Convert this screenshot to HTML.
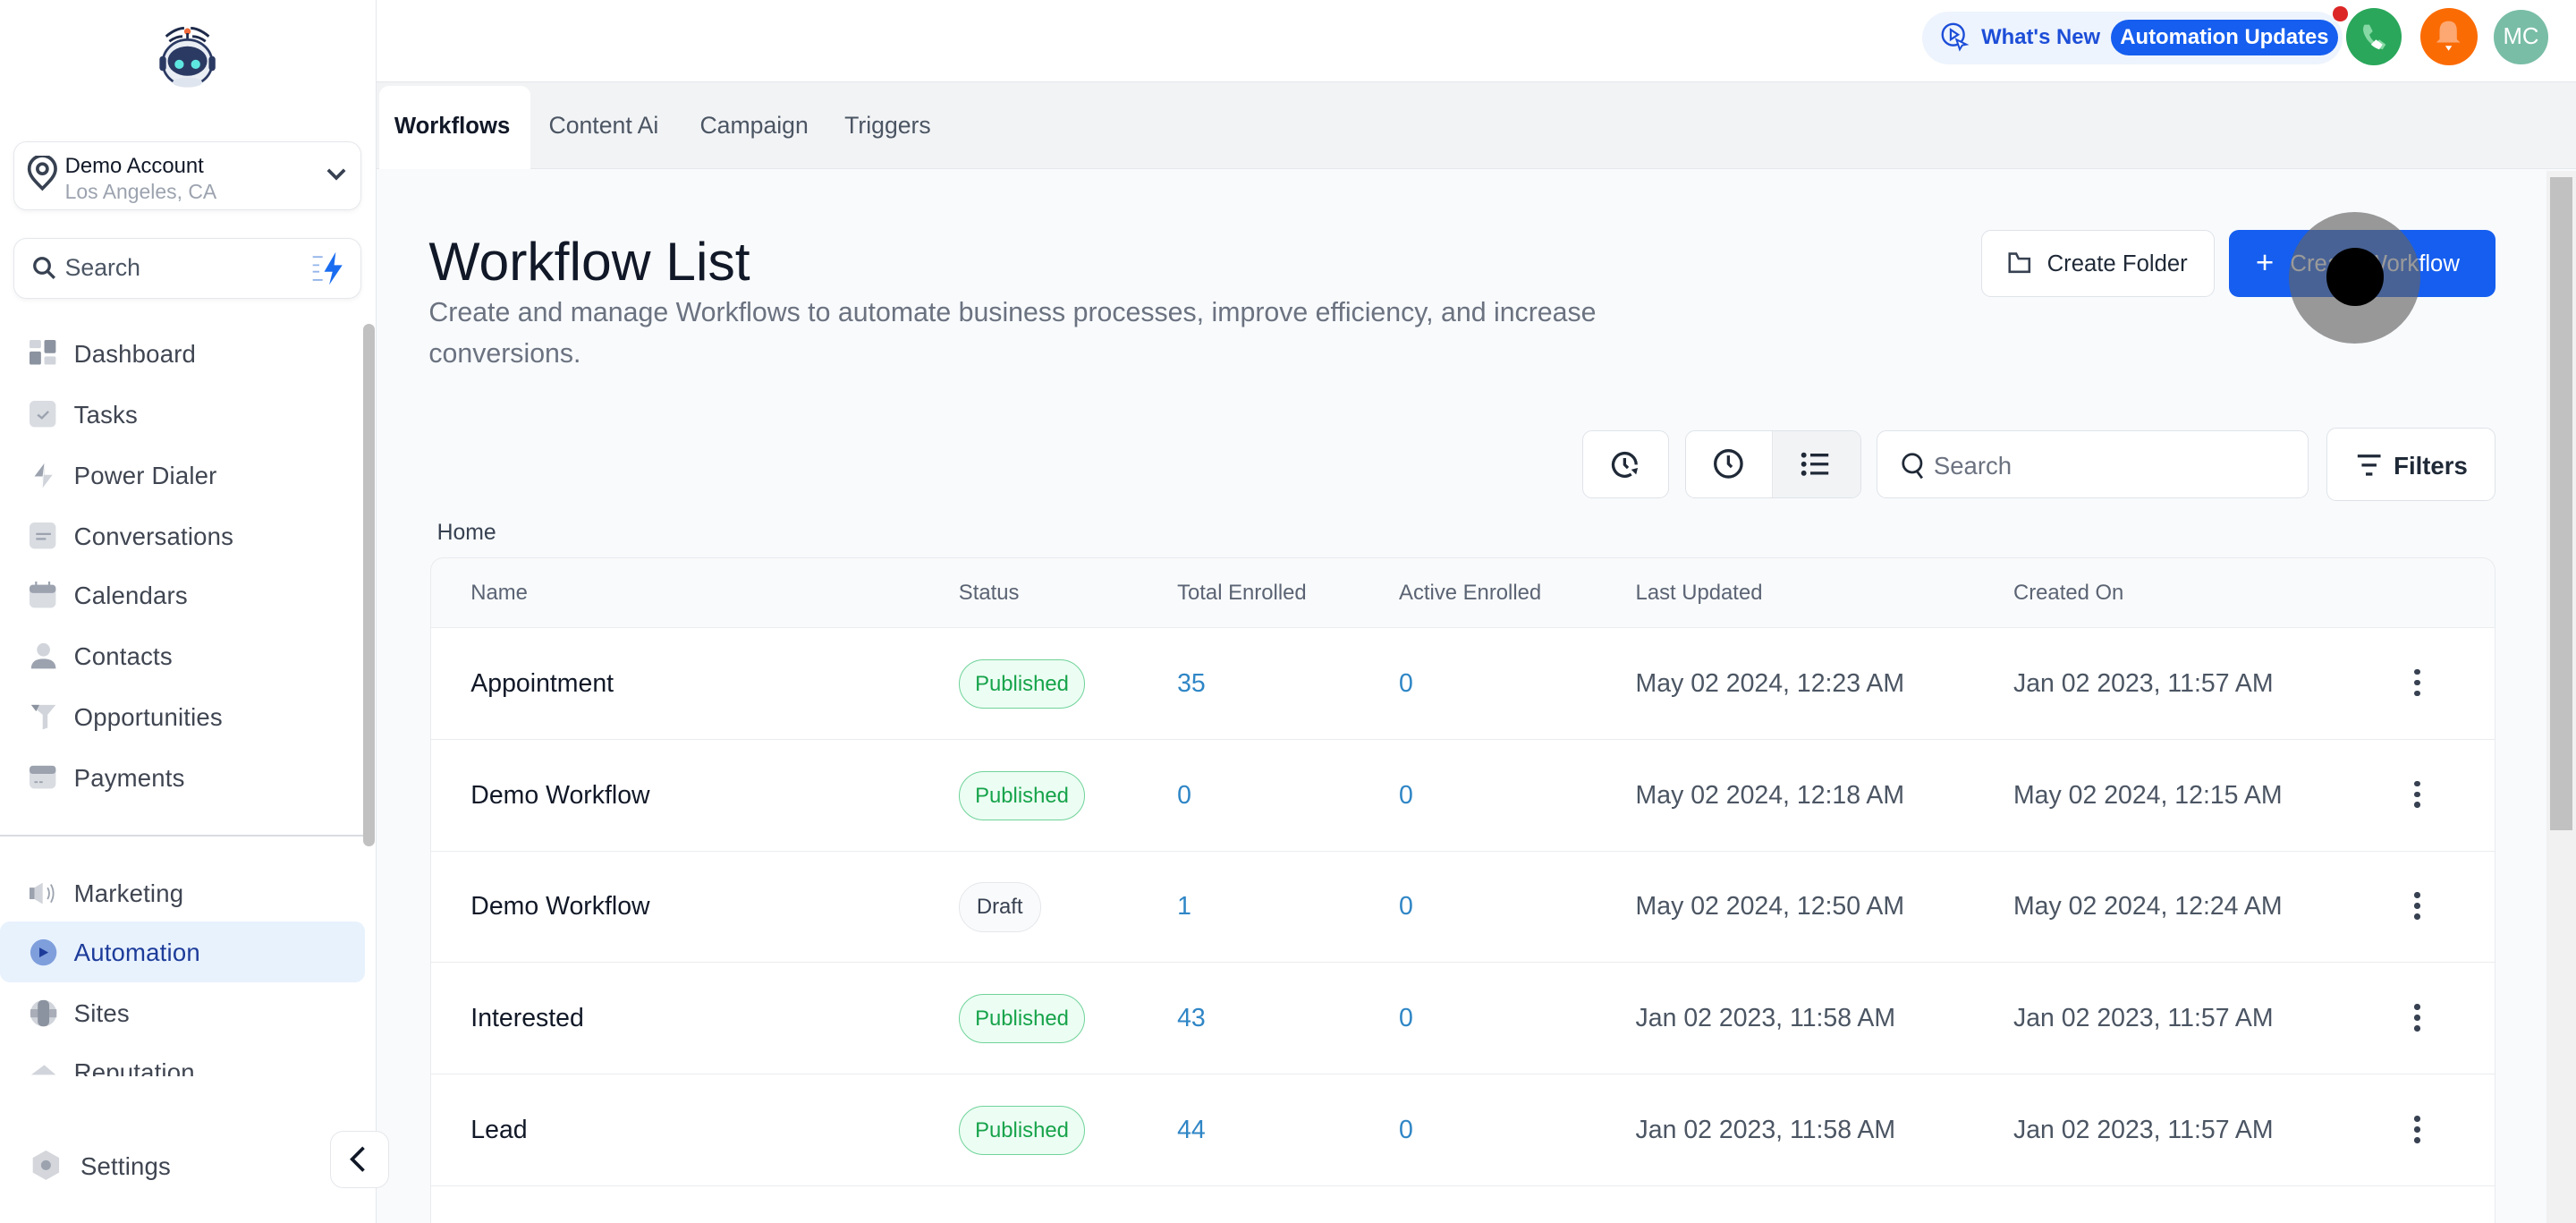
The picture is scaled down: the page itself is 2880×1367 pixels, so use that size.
<!DOCTYPE html>
<html><head><meta charset="utf-8">
<style>
*{box-sizing:border-box;margin:0;padding:0}
html,body{width:2880px;height:1367px;overflow:hidden;background:#fff}
#root{position:relative;width:1568px;height:744px;zoom:1.83674;font-family:"Liberation Sans",sans-serif;color:#1f2937;overflow:hidden;background:#f8fafc}
.a{position:absolute}
.side{left:0;top:0;width:229px;height:744px;background:#fff;border-right:1px solid #e5e7eb}
.nav{position:absolute;left:45px;font-size:15px;color:#3f4551;letter-spacing:.1px}
.ic{position:absolute;left:18px;width:17px;height:17px}
.top{left:229px;top:0;width:1339px;height:50px;background:#fff;border-bottom:1px solid #e5e7eb}
.tabs{left:229px;top:50px;width:1339px;height:53px;background:#f2f3f5;border-bottom:1px solid #e5e7eb}
.tab{position:absolute;top:19px;font-size:14.5px;color:#4b5563}
.btn{position:absolute;background:#fff;border:1px solid #dfe3e8;border-radius:6px}
.th{position:absolute;top:14px;font-size:13px;color:#5b6474}
.row{position:absolute;left:0;width:1256px;height:68px;border-top:1px solid #eaecef;background:#fff}
.c{position:absolute;top:25px;font-size:15.5px;color:#4b5563}
.n{color:#111827}
.num{color:#2f86c6}
.pub{position:absolute;left:321px;top:19px;width:77px;height:30px;border:1px solid #6fd39a;background:#ecfdf3;border-radius:15px;color:#16a34a;font-size:13px;text-align:center;line-height:29px}
.draft{position:absolute;left:321px;top:19px;width:50px;height:30px;border:1px solid #e5e7eb;background:#f9fafb;border-radius:15px;color:#374151;font-size:13px;text-align:center;line-height:29px}
.dots{position:absolute;left:1207px;top:25px;width:4px;height:18px}
.dots i{display:block;width:3.5px;height:3.5px;border-radius:50%;background:#374151;margin-bottom:3px}
</style></head><body><div id="root">

<!-- sidebar -->
<div class="a side">
  <svg class="a" style="left:93px;top:14px" width="42" height="42" viewBox="0 0 42 42">
    <path d="M8 8q6-5 11-5M10 11q4-3 8-3M34 8q-6-5-11-5M32 11q-4-3-8-3" stroke="#1e2a4a" stroke-width="1.6" fill="none"/>
    <circle cx="21" cy="5" r="2" fill="#f26b3a"/><line x1="21" y1="6" x2="21" y2="10" stroke="#1e2a4a" stroke-width="1.5"/>
    <ellipse cx="21" cy="24" rx="15" ry="14" fill="#e9edf4" stroke="#2b3a63" stroke-width="1.5"/>
    <ellipse cx="21" cy="23" rx="12" ry="9" fill="#2b3a63"/>
    <ellipse cx="21" cy="36" rx="9" ry="3" fill="#dfe5ef"/>
    <circle cx="16" cy="25" r="2.8" fill="#5ee7e0"/><circle cx="26" cy="25" r="2.8" fill="#5ee7e0"/>
    <rect x="4" y="20" width="4" height="9" rx="2" fill="#2b3a63"/><rect x="34" y="20" width="4" height="9" rx="2" fill="#2b3a63"/>
  </svg>
  <div class="a" style="left:8px;top:86px;width:212px;height:42px;border:1px solid #e5e7eb;border-radius:8px;box-shadow:0 1px 3px rgba(0,0,0,.05)">
    <svg class="a" style="left:7px;top:8px" width="20" height="22" viewBox="0 0 20 22"><path d="M10 20C5 15 2 12 2 8a8 8 0 0116 0c0 4-3 7-8 12z" fill="none" stroke="#374151" stroke-width="2"/><circle cx="10" cy="8" r="3" fill="none" stroke="#374151" stroke-width="2"/></svg>
    <div class="a" style="left:31px;top:7px;font-size:13px;color:#111827">Demo Account</div>
    <div class="a" style="left:31px;top:23px;font-size:12.5px;color:#9ca3af">Los Angeles, CA</div>
    <svg class="a" style="left:190px;top:16px" width="12" height="8" viewBox="0 0 12 8"><path d="M1 1l5 5 5-5" stroke="#374151" stroke-width="2" fill="none"/></svg>
  </div>
  <div class="a" style="left:8px;top:145px;width:212px;height:37px;border:1px solid #e5e7eb;border-radius:8px;box-shadow:0 1px 3px rgba(0,0,0,.05)">
    <svg class="a" style="left:11px;top:10px" width="15" height="15" viewBox="0 0 15 15"><circle cx="6" cy="6" r="4.5" stroke="#374151" stroke-width="1.8" fill="none"/><path d="M9.5 9.5l4 4" stroke="#374151" stroke-width="1.8"/></svg>
    <div class="a" style="left:31px;top:9px;font-size:14.5px;color:#4b5563">Search</div>
    <svg class="a" style="left:180px;top:6px" width="24" height="24" viewBox="0 0 24 24"><path d="M2 5h6M2 10h4M2 14h4M2 19h6" stroke="#93b4ea" stroke-width="1"/><path d="M16 2l-7 12h5l-2 8 8-12h-5z" fill="#1a6df0"/></svg>
  </div>
  <svg class="ic" style="top:207px" viewBox="0 0 17 17"><rect x="0" y="0" width="7" height="5" rx="1" fill="#d1d5db"/><rect x="9" y="0" width="7" height="8" rx="1" fill="#8c93a0"/><rect x="0" y="7" width="7" height="8" rx="1" fill="#8c93a0"/><rect x="9" y="10" width="7" height="5" rx="1" fill="#d1d5db"/></svg>
  <div class="nav" style="top:207px">Dashboard</div>
  <svg class="ic" style="top:244px" viewBox="0 0 17 17"><rect width="16" height="16" rx="3" fill="#d9dce1"/><path d="M5 8.5l2.5 2 4-4" stroke="#9ca3af" stroke-width="1.3" fill="none"/></svg>
  <div class="nav" style="top:244px">Tasks</div>
  <svg class="ic" style="top:281px" viewBox="0 0 17 17"><path d="M9 1L3 9h5l-1 7" fill="#9ca3af"/><path d="M9 1v7h5l-6 8" fill="#d1d5db"/></svg>
  <div class="nav" style="top:281px">Power Dialer</div>
  <svg class="ic" style="top:318px" viewBox="0 0 17 17"><rect width="16" height="16" rx="3" fill="#d9dce1"/><path d="M4 7h9M4 10h6" stroke="#9ca3af" stroke-width="1.2"/></svg>
  <div class="nav" style="top:318px">Conversations</div>
  <svg class="ic" style="top:354px" viewBox="0 0 17 17"><rect y="2" width="16" height="14" rx="3" fill="#d9dce1"/><rect y="2" width="16" height="5" rx="2" fill="#9ca3af"/><path d="M4 0v3M12 0v3" stroke="#9ca3af" stroke-width="1.2"/></svg>
  <div class="nav" style="top:354px">Calendars</div>
  <svg class="ic" style="top:391px" viewBox="0 0 17 17"><circle cx="8.5" cy="4.5" r="4" fill="#d1d5db"/><path d="M1 16q0-6 7.5-6t7.5 6z" fill="#9ca3af"/></svg>
  <div class="nav" style="top:391px">Contacts</div>
  <svg class="ic" style="top:428px" viewBox="0 0 17 17"><path d="M1 1h15l-5 6v8l-3 1V7z" fill="#d1d5db"/><path d="M1 1h5l-2 4z" fill="#8c93a0"/></svg>
  <div class="nav" style="top:428px">Opportunities</div>
  <svg class="ic" style="top:465px" viewBox="0 0 17 17"><rect y="1" width="16" height="14" rx="3" fill="#d9dce1"/><rect y="1" width="16" height="5" rx="2" fill="#9ca3af"/><path d="M3 11h5" stroke="#9ca3af" stroke-dasharray="2 1"/></svg>
  <div class="nav" style="top:465px">Payments</div>
  <div class="a" style="left:0;top:508px;width:221px;height:1px;background:#d9dce1"></div>
  <svg class="ic" style="top:535px" viewBox="0 0 17 17"><path d="M0 5h3l5-3v13l-5-3H0z" fill="#d1d5db"/><rect x="0" y="5" width="3" height="7" fill="#9ca3af"/><path d="M11 5q2 3.5 0 7M13 3q3 5.5 0 11" stroke="#9ca3af" fill="none"/></svg>
  <div class="nav" style="top:535px">Marketing</div>
  <div class="a" style="left:0;top:561px;width:222px;height:37px;background:#e8f2fd;border-radius:6px"></div>
  <svg class="ic" style="top:571px" viewBox="0 0 17 17"><circle cx="8.5" cy="8.5" r="8" fill="#7f9fdc"/><path d="M6 5.5v6l5.5-3z" fill="#1d3c9a"/></svg>
  <div class="nav" style="top:571px;color:#1d3c9a">Automation</div>
  <svg class="ic" style="top:608px" viewBox="0 0 17 17"><circle cx="8.5" cy="8.5" r="8" fill="#d1d5db"/><rect x="5" y="0.5" width="7" height="16" rx="3" fill="#8c93a0"/><rect x="0.5" y="6" width="16" height="5" fill="#8c93a0" opacity=".6"/></svg>
  <div class="nav" style="top:608px">Sites</div>
  <div class="a" style="left:0;top:640px;width:221px;height:15px;overflow:hidden">
    <svg class="ic" style="top:4px" viewBox="0 0 17 17"><path d="M1 10l8-6 7 6z" fill="#d1d5db"/></svg>
    <div class="nav" style="top:4px">Reputation</div>
  </div>
  <svg class="a" style="left:18px;top:699px;width:20px;height:20px" viewBox="0 0 20 20"><path d="M10 1l8 4.5v9L10 19l-8-4.5v-9z" fill="#d4d6db"/><circle cx="10" cy="10" r="3" fill="#9ca3af"/></svg>
  <div class="nav" style="top:701px;left:49px">Settings</div>
  <div class="a" style="left:221px;top:197px;width:7px;height:318px;background:#c1c1c1;border-radius:4px"></div>
</div>
<div class="a" style="left:201px;top:688px;width:36px;height:35px;background:#fff;border:1px solid #e5e7eb;border-radius:8px">
  <svg class="a" style="left:11px;top:9px" width="12" height="16" viewBox="0 0 12 16"><path d="M9 1L2 8l7 7" stroke="#111827" stroke-width="2" fill="none"/></svg>
</div>

<!-- top header -->
<div class="a top"></div>
<div class="a" style="left:1170px;top:7px;width:256px;height:32px;background:#eef4fd;border-radius:16px"></div>
<svg class="a" style="left:1181px;top:13px" width="18" height="19" viewBox="0 0 18 19"><circle cx="8" cy="8" r="6.5" stroke="#1d4ed8" stroke-width="1.3" fill="none"/><path d="M6.5 5v6l4.5-3z" stroke="#1d4ed8" stroke-width="1.2" fill="none"/><path d="M10 11l2 6 1.5-2.5 2.5-.5z" fill="#fff" stroke="#1d4ed8" stroke-width="1.1"/></svg>
<div class="a" style="left:1206px;top:15px;font-size:13px;font-weight:bold;color:#1d4ed8">What's New</div>
<div class="a" style="left:1285px;top:12px;width:138px;height:22px;background:#155eef;border-radius:11px;color:#fff;font-size:13px;font-weight:bold;text-align:center;line-height:22px">Automation Updates</div>
<div class="a" style="left:1420px;top:4px;width:9px;height:9px;border-radius:50%;background:#dc2626"></div>
<div class="a" style="left:1428px;top:5px;width:34px;height:35px;border-radius:50%;background:#2aa75b"></div>
<svg class="a" style="left:1436px;top:13px" width="18" height="18" viewBox="0 0 18 18"><path d="M3 2q-2 3 1 8t10 7l2-3-4-3-2 2q-3-2-4-5l2-2-2-4z" fill="#86d9a5"/><path d="M10 11l4 3-2 3q-3-1-5-3z" fill="#fff"/></svg>
<div class="a" style="left:1473px;top:5px;width:35px;height:35px;border-radius:50%;background:#fb6b04"></div>
<svg class="a" style="left:1482px;top:11px" width="17" height="22" viewBox="0 0 17 22"><path d="M8.5 2q5 0 5 6v5l2 2H1l2-2V8q0-6 5.5-6z" fill="#fda872"/><path d="M6.5 17h4l-2 3z" fill="#fff"/></svg>
<div class="a" style="left:1518px;top:6px;width:33px;height:33px;border-radius:50%;background:#79bda6;color:#fff;font-size:14px;text-align:center;line-height:33px">MC</div>

<!-- tabs -->
<div class="a tabs"></div>
<div class="a" style="left:231px;top:52px;width:92px;height:51px;background:#fff;border-radius:6px 6px 0 0"></div>
<div class="tab" style="left:240px;top:69px;color:#111827;font-weight:bold;font-size:14px">Workflows</div>
<div class="tab" style="left:334px;top:68px">Content Ai</div>
<div class="tab" style="left:426px;top:68px">Campaign</div>
<div class="tab" style="left:514px;top:68px">Triggers</div>

<!-- page scrollbar -->
<div class="a" style="left:1550px;top:104px;width:18px;height:640px;background:#f1f1f1"></div>
<div class="a" style="left:1552px;top:108px;width:14px;height:397px;background:#c1c1c1"></div>

<!-- heading -->
<div class="a" style="left:261px;top:140px;font-size:33px;color:#111827">Workflow List</div>
<div class="a" style="left:261px;top:178px;width:760px;font-size:16.5px;line-height:25px;color:#6b7280">Create and manage Workflows to automate business processes, improve efficiency, and increase conversions.</div>

<div class="btn" style="left:1206px;top:140px;width:142px;height:41px"></div>
<svg class="a" style="left:1222px;top:152px" width="16" height="16" viewBox="0 0 16 16"><path d="M1.5 3.5v10h12V5.5H7L5.5 2.5h-4z" stroke="#374151" stroke-width="1.4" fill="none"/></svg>
<div class="a" style="left:1246px;top:153px;font-size:14px;color:#1f2937">Create Folder</div>
<div class="a" style="left:1357px;top:140px;width:162px;height:41px;background:#155eef;border-radius:6px"></div>
<div class="a" style="left:1373px;top:149px;font-size:19px;color:#fff">+</div>
<div class="a" style="left:1394px;top:153px;font-size:14px;color:#fff">Create Workflow</div>
<div class="a" style="left:1393px;top:129px;width:80px;height:80px;border-radius:50%;background:rgba(100,100,100,.65)"></div>
<div class="a" style="left:1416px;top:151px;width:35px;height:35px;border-radius:50%;background:#000"></div>

<!-- toolbar -->
<div class="btn" style="left:963px;top:262px;width:53px;height:41px"></div>
<svg class="a" style="left:979px;top:273px" width="20" height="20" viewBox="0 0 20 20"><path d="M17 10a7 7 0 10-3 5.8" stroke="#1f2937" stroke-width="1.8" fill="none"/><path d="M10 6v4l2 2" stroke="#1f2937" stroke-width="1.8" fill="none"/><path d="M14 13l3 3 1-4z" fill="#1f2937"/></svg>
<div class="btn" style="left:1026px;top:262px;width:107px;height:41px;overflow:hidden"><div class="a" style="left:52px;top:0;width:54px;height:41px;background:#f2f3f5;border-left:1px solid #e5e7eb"></div></div>
<svg class="a" style="left:1042px;top:272px" width="20" height="20" viewBox="0 0 20 20"><circle cx="10" cy="10" r="8" stroke="#1f2937" stroke-width="1.8" fill="none"/><path d="M10 5v5l2 2" stroke="#1f2937" stroke-width="1.8" fill="none"/></svg>
<svg class="a" style="left:1096px;top:275px" width="18" height="15" viewBox="0 0 18 15"><circle cx="2" cy="2" r="1.6" fill="#1f2937"/><circle cx="2" cy="7.5" r="1.6" fill="#1f2937"/><circle cx="2" cy="13" r="1.6" fill="#1f2937"/><path d="M6 2h11M6 7.5h11M6 13h11" stroke="#1f2937" stroke-width="1.8"/></svg>
<div class="btn" style="left:1142px;top:262px;width:263px;height:41px"></div>
<svg class="a" style="left:1157px;top:275px" width="15" height="17" viewBox="0 0 15 17"><circle cx="7" cy="7" r="5.5" stroke="#1f2937" stroke-width="1.5" fill="none"/><path d="M10 12l3 4" stroke="#1f2937" stroke-width="1.5"/></svg>
<div class="a" style="left:1177px;top:275px;font-size:15px;color:#6b7280">Search</div>
<div class="btn" style="left:1416px;top:260px;width:103px;height:45px"></div>
<svg class="a" style="left:1434px;top:276px" width="16" height="14" viewBox="0 0 16 14"><path d="M1 1.5h14M3.5 7h9M6 12.5h4" stroke="#1f2937" stroke-width="1.8"/></svg>
<div class="a" style="left:1457px;top:275px;font-size:15px;color:#1f2937;font-weight:bold">Filters</div>

<div class="a" style="left:266px;top:317px;font-size:13.5px;color:#374151">Home</div>

<!-- table -->
<div class="a" style="left:262px;top:339px;width:1257px;height:405px;border:1px solid #e9ebee;border-bottom:none;border-radius:8px 8px 0 0;background:#f9fafb;overflow:hidden">
  <div class="th" style="left:24px">Name</div>
  <div class="th" style="left:321px">Status</div>
  <div class="th" style="left:454px">Total Enrolled</div>
  <div class="th" style="left:589px">Active Enrolled</div>
  <div class="th" style="left:733px">Last Updated</div>
  <div class="th" style="left:963px">Created On</div>

  <div class="row" style="top:42px"><div class="c n" style="left:24px">Appointment</div><div class="pub">Published</div><div class="c num" style="left:454px">35</div><div class="c num" style="left:589px">0</div><div class="c" style="left:733px">May 02 2024, 12:23 AM</div><div class="c" style="left:963px">Jan 02 2023, 11:57 AM</div><div class="dots"><i></i><i></i><i></i></div></div>
  <div class="row" style="top:110px"><div class="c n" style="left:24px">Demo Workflow</div><div class="pub">Published</div><div class="c num" style="left:454px">0</div><div class="c num" style="left:589px">0</div><div class="c" style="left:733px">May 02 2024, 12:18 AM</div><div class="c" style="left:963px">May 02 2024, 12:15 AM</div><div class="dots"><i></i><i></i><i></i></div></div>
  <div class="row" style="top:178px"><div class="c n" style="left:24px">Demo Workflow</div><div class="draft">Draft</div><div class="c num" style="left:454px">1</div><div class="c num" style="left:589px">0</div><div class="c" style="left:733px">May 02 2024, 12:50 AM</div><div class="c" style="left:963px">May 02 2024, 12:24 AM</div><div class="dots"><i></i><i></i><i></i></div></div>
  <div class="row" style="top:246px"><div class="c n" style="left:24px">Interested</div><div class="pub">Published</div><div class="c num" style="left:454px">43</div><div class="c num" style="left:589px">0</div><div class="c" style="left:733px">Jan 02 2023, 11:58 AM</div><div class="c" style="left:963px">Jan 02 2023, 11:57 AM</div><div class="dots"><i></i><i></i><i></i></div></div>
  <div class="row" style="top:314px"><div class="c n" style="left:24px">Lead</div><div class="pub">Published</div><div class="c num" style="left:454px">44</div><div class="c num" style="left:589px">0</div><div class="c" style="left:733px">Jan 02 2023, 11:58 AM</div><div class="c" style="left:963px">Jan 02 2023, 11:57 AM</div><div class="dots"><i></i><i></i><i></i></div></div>
  <div class="row" style="top:382px"></div>
</div>

</div></body></html>
